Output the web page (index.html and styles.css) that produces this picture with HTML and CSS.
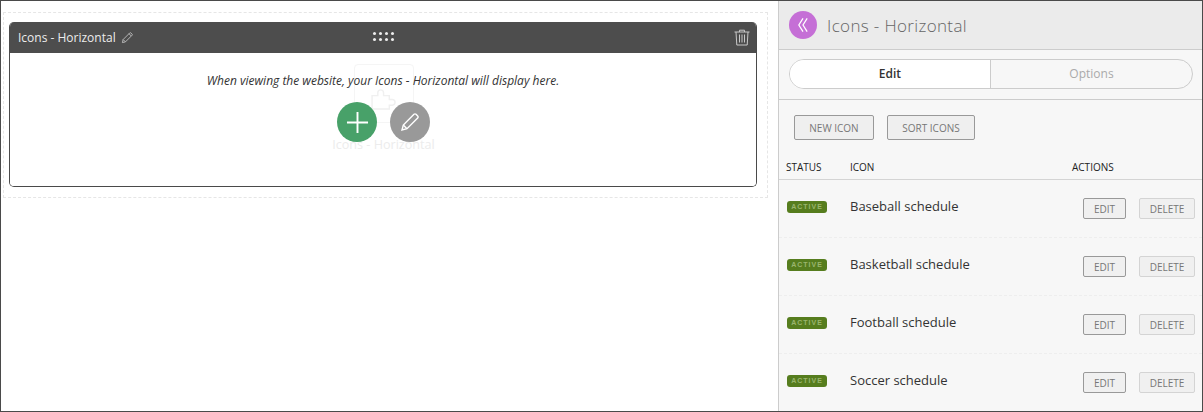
FILE: index.html
```html
<!DOCTYPE html>
<html lang="en">
<head>
    <meta charset="UTF-8">
    <title>Icons - Horizontal</title>
    <link rel="stylesheet" href="styles.css">
</head>
<body>
    <div class="frame">
        <main class="canvas">
            <div class="dashed">
                <section class="card">
                    <header class="card-head">
                        <div class="card-title">
                            <span>Icons - Horizontal</span>
                            <svg class="pencil-small" viewBox="0 0 14 14" fill="none" stroke="#bdbdbd" stroke-width="1">
                                <path d="M1.5 12.5l.8-3.3 7-7a1 1 0 0 1 1.5 0l1 1a1 1 0 0 1 0 1.5l-7 7z"/>
                                <path d="M2.3 9.2l2.5 2.5M8.6 2.9l2.5 2.5"/>
                            </svg>
                        </div>
                        <div class="dots">
                            <i></i><i></i><i></i><i></i><i></i><i></i><i></i><i></i>
                        </div>
                        <svg class="trash" viewBox="0 0 16 17" fill="none" stroke="#c8c8c8" stroke-width="1">
                            <path d="M.5 3h15M5.500 3V1.200h5V3M2 3l.8 13h10.400L14 3"/>
                            <path d="M5.500 5.500v8M8 5.500v8M10.500 5.500v8"/>
                        </svg>
                    </header>
                    <div class="card-body">
                        <div class="ghost">
                            <div class="ghost-box">
                                <svg viewBox="0 0 28 24" fill="none" stroke="#f0f0f0" stroke-width="1.500">
                                    <path d="M1 9h6V6a3 3 0 0 1 6 0v3h6v4h3a3 3 0 0 1 0 6h-3v4H1z"/>
                                </svg>
                            </div>
                            <span>Icons - Horizontal</span>
                        </div>
                        <p class="notice">When viewing the website, your Icons - Horizontal will display here.</p>
                        <div class="fabs">
                            <div class="fab fab-add">
                                <svg viewBox="0 0 24 24" stroke="#fff" stroke-width="2"><path d="M12 1v22M1 12h22"/></svg>
                            </div>
                            <div class="fab fab-edit">
                                <svg viewBox="0 0 20 20" fill="none" stroke="#fff" stroke-width="1.400">
                                    <path d="M2 18l1.300-5L14 2.300a1.400 1.400 0 0 1 2 0l1.700 1.700a1.400 1.400 0 0 1 0 2L7 16.700z"/>
                                    <path d="M3.300 13L7 16.700"/>
                                </svg>
                            </div>
                        </div>
                    </div>
                </section>
            </div>
        </main>
        <aside class="panel">
            <header class="panel-head">
                <div class="back">
                    <svg viewBox="0 0 12 18" fill="none" stroke="#fff" stroke-width="1.500"><path d="M6 1L1 9l5 8M11 1L6 9l5 8"/></svg>
                </div>
                <h2>Icons - Horizontal</h2>
            </header>
            <div class="tabs-wrap">
                <div class="tabs">
                    <div class="tab tab-on">Edit</div>
                    <div class="tab">Options</div>
                </div>
            </div>
            <div class="toolbar">
                <button class="btn btn-new">NEW ICON</button>
                <button class="btn btn-sort">SORT ICONS</button>
            </div>
            <div class="row-head">
                <span class="col-status">STATUS</span>
                <span class="col-icon">ICON</span>
                <span class="col-actions">ACTIONS</span>
            </div>
            <div class="row">
                <span class="col-status"><span class="badge">ACTIVE</span></span>
                <span class="col-icon name">Baseball schedule</span>
                <div class="row-btns"><button class="mini">EDIT</button><button class="mini mini-del">DELETE</button></div>
            </div>
            <div class="row">
                <span class="col-status"><span class="badge">ACTIVE</span></span>
                <span class="col-icon name">Basketball schedule</span>
                <div class="row-btns"><button class="mini">EDIT</button><button class="mini mini-del">DELETE</button></div>
            </div>
            <div class="row">
                <span class="col-status"><span class="badge">ACTIVE</span></span>
                <span class="col-icon name">Football schedule</span>
                <div class="row-btns"><button class="mini">EDIT</button><button class="mini mini-del">DELETE</button></div>
            </div>
            <div class="row">
                <span class="col-status"><span class="badge">ACTIVE</span></span>
                <span class="col-icon name">Soccer schedule</span>
                <div class="row-btns"><button class="mini">EDIT</button><button class="mini mini-del">DELETE</button></div>
            </div>
        </aside>
    </div>
</body>
</html>
```

FILE: styles.css
```css
* {
    box-sizing: border-box;
}
html, body {
    margin: 0;
    height: 100%;
    overflow: hidden;
}
body {
    font-family: "Open Sans", sans-serif;
    background: #fff;
    color: #333;
}
button {
    font-family: inherit;
}
.frame {
    display: flex;
    width: 1203px;
    height: 412px;
    border: 1px solid #4a4a4a;
}
.canvas {
    width: 777px;
    padding: 11px 10px 0 2px;
}
.dashed {
    height: 186px;
    padding: 9px 10px 9px 5px;
    border: 1px dashed #e6e6e6;
}
.card {
    height: 165px;
    display: flex;
    flex-direction: column;
    border: 1px solid #4a4a4a;
    border-top: 0;
    border-radius: 5px;
    overflow: hidden;
}
.card-head {
    position: relative;
    height: 31px;
    flex: none;
    display: flex;
    align-items: center;
    justify-content: space-between;
    padding: 0 6px 0 8px;
    background: #4d4d4d;
    color: #ececec;
    font-size: 12px;
}
.card-title {
    display: flex;
    align-items: center;
    gap: 5px;
}
.pencil-small {
    width: 13px;
    height: 13px;
}
.dots {
    position: absolute;
    left: 363px;
    top: 10px;
    display: grid;
    grid-template-columns: repeat(4, 3px);
    gap: 3px;
}
.dots i {
    width: 3px;
    height: 3px;
    border-radius: 50%;
    background: #eee;
}
.trash {
    width: 16px;
    height: 17px;
}
.card-body {
    position: relative;
    flex: 1;
    background: #fff;
}
.notice {
    position: relative;
    margin: 19px 0 0;
    text-align: center;
    font-size: 12px;
    line-height: 17px;
    font-style: italic;
    color: #333;
}
.ghost {
    position: absolute;
    left: 321px;
    top: 11px;
    width: 105px;
    display: flex;
    flex-direction: column;
    align-items: center;
    color: #ececec;
    font-size: 12.600px;
}
.ghost-box {
    width: 60px;
    height: 59px;
    padding: 22px 11px 0 16px;
    border: 1px solid #f5f5f5;
    border-radius: 4px;
}
.ghost-box svg {
    display: block;
    width: 27px;
    height: 23px;
}
.ghost span {
    margin-top: 13px;
    line-height: 17px;
    white-space: nowrap;
}
.fabs {
    position: absolute;
    left: 327px;
    top: 49px;
    display: flex;
    gap: 13px;
}
.fab {
    width: 40px;
    height: 40px;
    border-radius: 50%;
    display: flex;
    align-items: center;
    justify-content: center;
}
.fab-add {
    background: #48a169;
}
.fab-add svg {
    width: 23px;
    height: 23px;
}
.fab-edit {
    background: #999;
}
.fab-edit svg {
    width: 20px;
    height: 20px;
}
.panel {
    width: 424px;
    border-left: 1px solid #ccc;
    background: #f7f7f7;
}
.panel-head {
    height: 49px;
    display: flex;
    align-items: center;
    gap: 10px;
    padding: 0 0 0 10px;
    background: #ebebeb;
    border-bottom: 1px solid #ccc;
}
.back {
    width: 28px;
    height: 28px;
    border-radius: 50%;
    background: #c56fd6;
    display: flex;
    align-items: center;
    justify-content: center;
}
.back svg {
    width: 10px;
    height: 16px;
}
.panel-head h2 {
    margin: 0;
    font-size: 17px;
    font-weight: 300;
    color: #666;
    letter-spacing: .35px;
}
.tabs-wrap {
    height: 50px;
    padding: 9px 9px 0 10px;
    border-bottom: 1px solid #ccc;
}
.tabs {
    display: flex;
    height: 30px;
    border: 1px solid #ccc;
    border-radius: 15px;
    overflow: hidden;
}
.tab {
    flex: 1;
    text-align: center;
    font-size: 12px;
    line-height: 28px;
    color: #aaa;
}
.tab-on {
    flex: none;
    width: 201px;
    background: #fff;
    color: #333;
    font-weight: 600;
    border-right: 1px solid #ccc;
}
.toolbar {
    display: flex;
    gap: 13px;
    padding: 15px 0 0 15px;
    height: 50px;
}
.btn {
    height: 25px;
    padding: 0;
    border: 1px solid #999;
    border-radius: 2px;
    background: #efefef;
    color: #777;
    font-size: 10px;
}
.btn-new {
    width: 80px;
}
.btn-sort {
    width: 88px;
}
.row-head {
    display: flex;
    align-items: center;
    height: 30px;
    padding-top: 5px;
    border-bottom: 1px solid #d4d4d4;
    font-size: 10px;
    color: #222;
}
.col-status {
    width: 71px;
    flex: none;
    padding-left: 7px;
}
.col-icon {
    width: 222px;
    flex: none;
}
.row {
    display: flex;
    align-items: center;
    height: 58px;
    border-bottom: 1px dashed #eee;
}
.row:last-child {
    border-bottom-color: transparent;
}
.badge {
    display: block;
    width: 40px;
    height: 12px;
    margin-top: -3px;
    margin-left: 1px;
    border-radius: 3px;
    background: #567d1e;
    color: #9ab56f;
    font-family: "Liberation Sans", sans-serif;
    font-size: 7px;
    font-weight: 700;
    line-height: 12px;
    letter-spacing: 1px;
    text-align: center;
}
.name {
    margin-top: -5px;
    font-size: 13px;
    font-weight: 500;
    color: #333;
}
.row-btns {
    display: flex;
    gap: 13px;
    margin-left: auto;
    margin-right: 7px;
}
.mini {
    width: 43px;
    height: 21px;
    padding: 0;
    border: 1px solid #999;
    border-radius: 2px;
    background: #f0f0f0;
    color: #777;
    font-size: 10px;
}
.mini-del {
    width: 56px;
    border-color: #d4d4d4;
}
```
